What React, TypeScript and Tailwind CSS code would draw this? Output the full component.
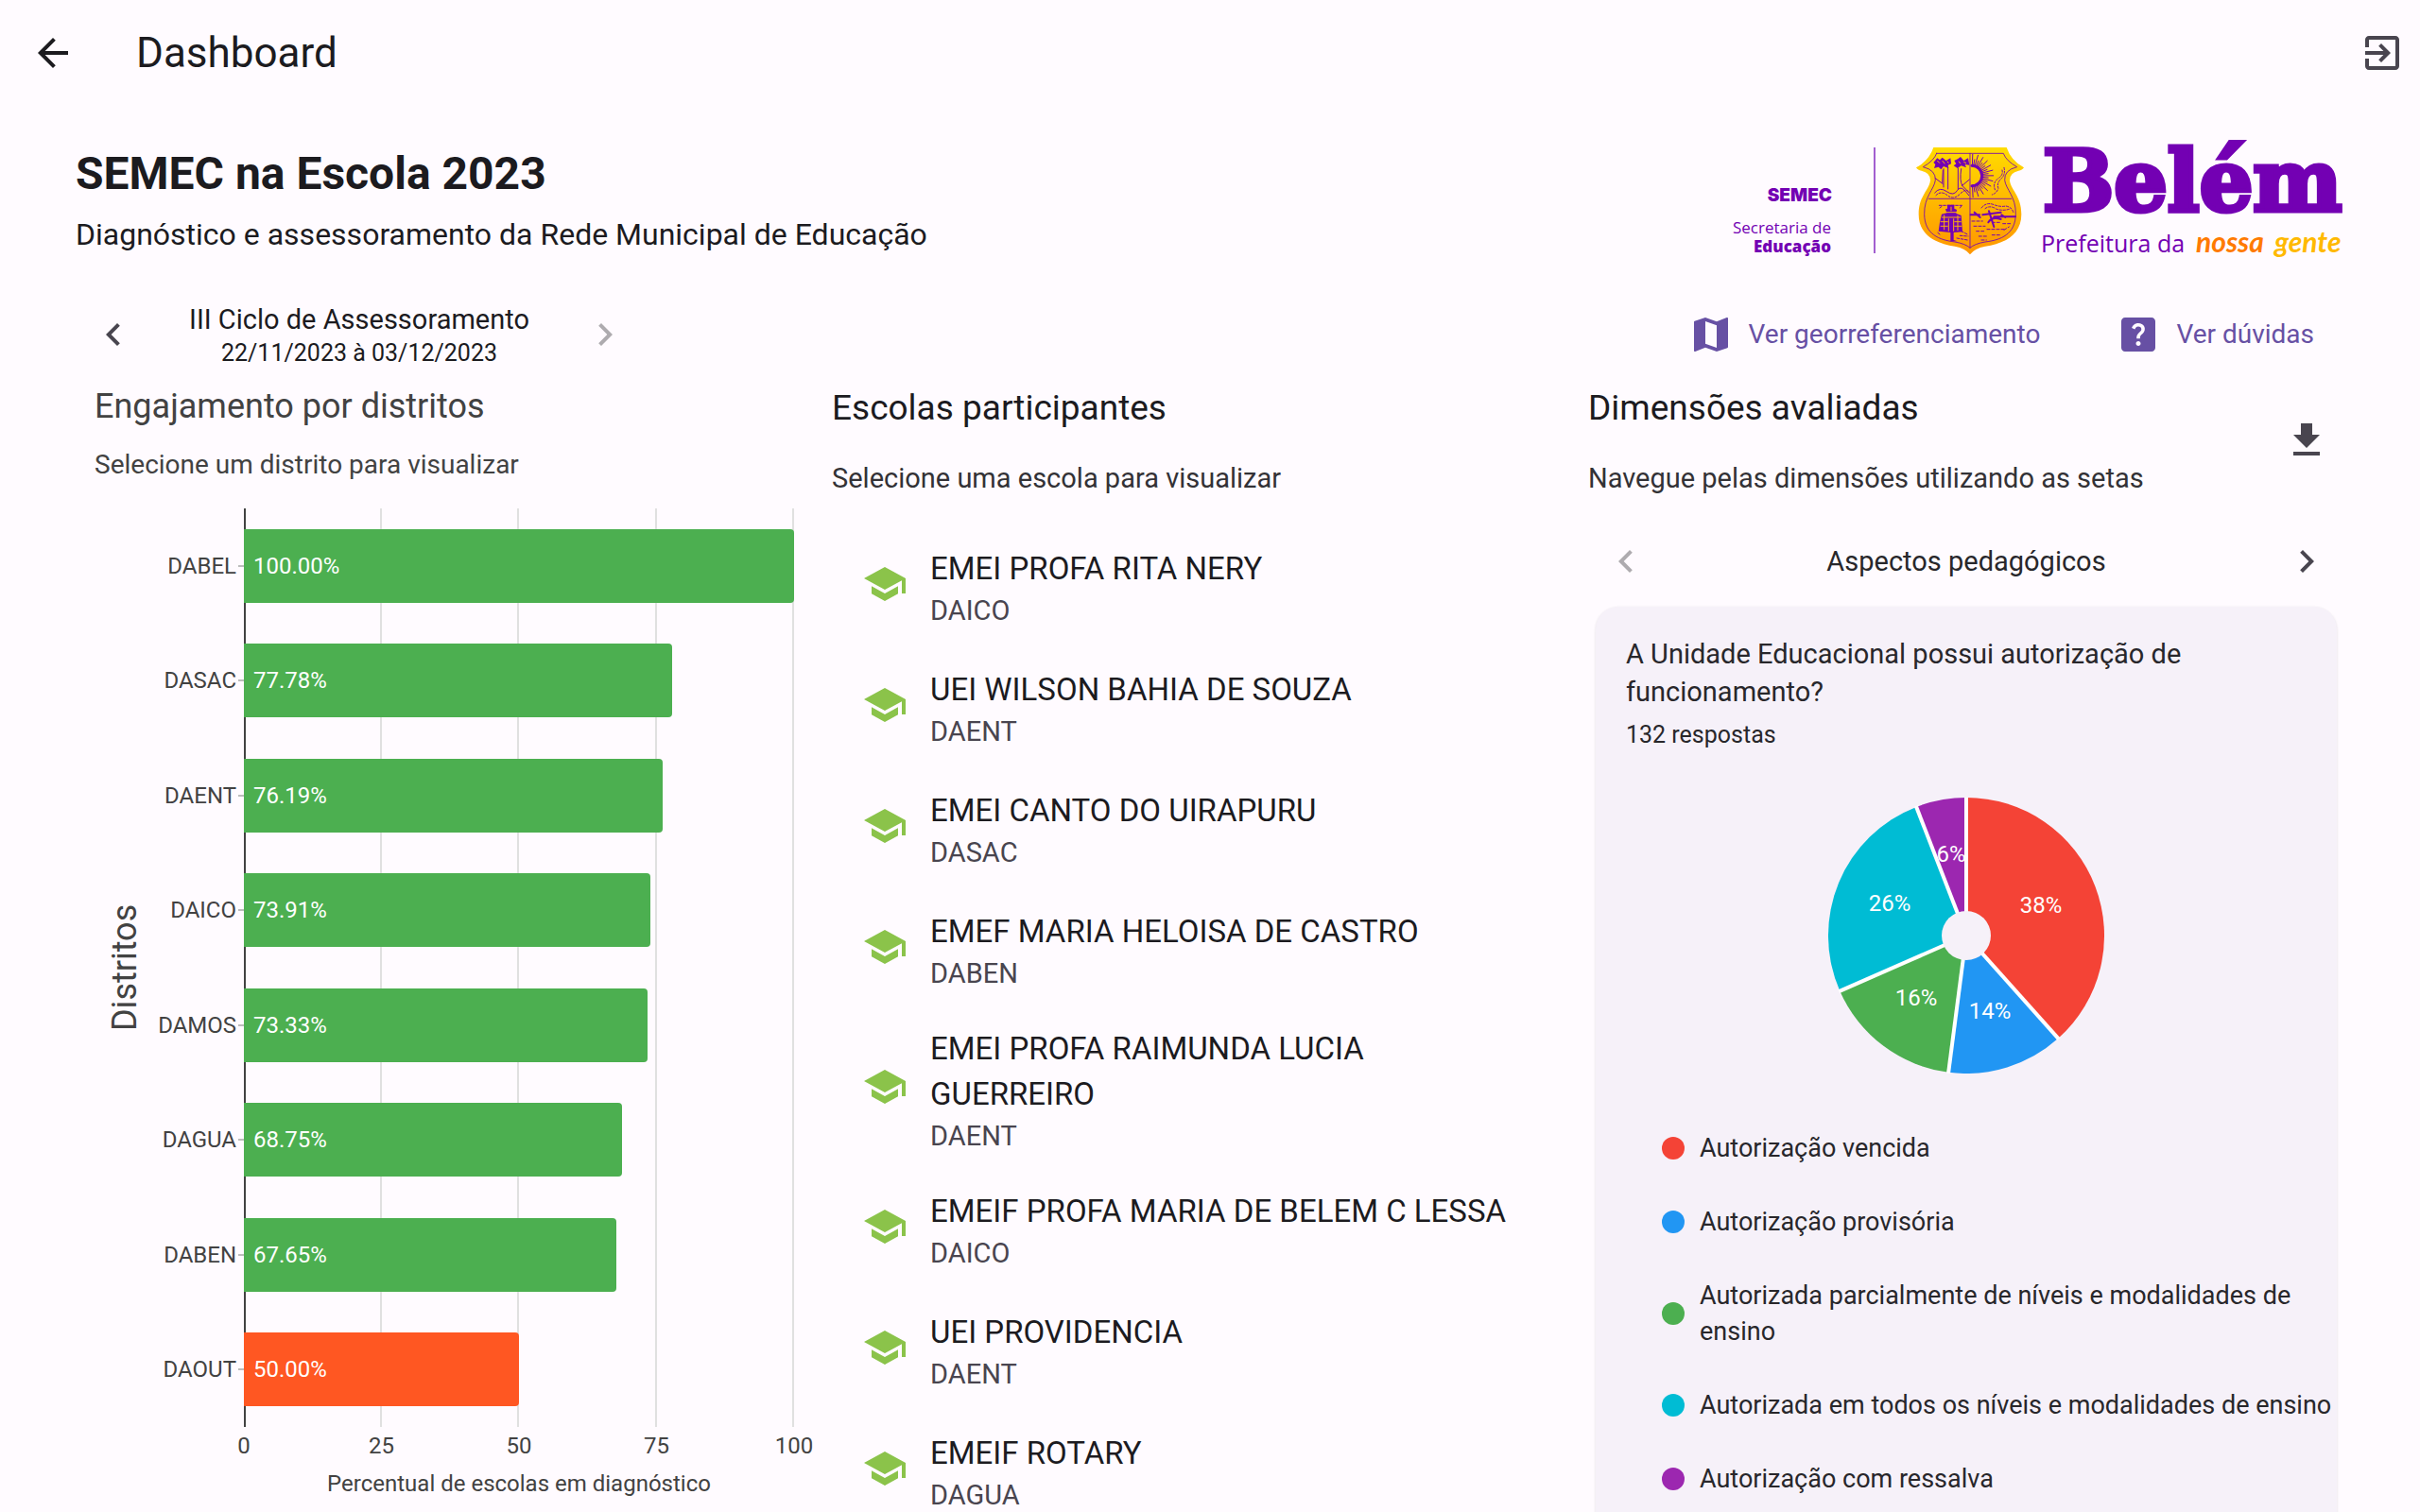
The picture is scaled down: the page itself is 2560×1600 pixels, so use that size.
import type { ReactNode } from "react";
import { MdHelpCenter, MdMap } from "react-icons/md";

const ICONS = {
  back: "M20 11H7.83l5.59-5.59L12 4l-8 8 8 8 1.41-1.41L7.83 13H20v-2z",
  exit: "M10.09 15.59L11.5 17l5-5-5-5-1.41 1.41L12.67 11H3v2h9.67l-2.58 2.59zM19 3H5c-1.11 0-2 .9-2 2v4h2V5h14v14H5v-4H3v4c0 1.1.89 2 2 2h14c1.1 0 2-.9 2-2V5c0-1.1-.9-2-2-2z",
  left: "M15.41 7.41L14 6l-6 6 6 6 1.41-1.41L10.83 12z",
  right: "M10 6L8.59 7.41 13.17 12l-4.58 4.59L10 18l6-6z",
  download: "M19 9h-4V3H9v6H5l7 7 7-7zM5 18v2h14v-2H5z",
  school: "M5 13.18v4L12 21l7-3.82v-4L12 17l-7-3.82zM12 3L1 9l11 6 9-4.91V17h2V9L12 3z",
};

function Icon({ name }: { name: keyof typeof ICONS }) {
  return (
    <svg viewBox="0 0 24 24" className="size-12 shrink-0 fill-current" aria-hidden="true">
      <path d={ICONS[name]} />
    </svg>
  );
}

function IconButton({ name, label, disabled = false }: { name: keyof typeof ICONS; label: string; disabled?: boolean }) {
  return (
    <button
      type="button"
      aria-label={label}
      disabled={disabled}
      className="flex size-20 shrink-0 items-center justify-center text-[#49454f] disabled:text-[#aeabaf]"
    >
      <Icon name={name} />
    </button>
  );
}

const districts = [
  { name: "DABEL", value: 100 },
  { name: "DASAC", value: 77.78 },
  { name: "DAENT", value: 76.19 },
  { name: "DAICO", value: 73.91 },
  { name: "DAMOS", value: 73.33 },
  { name: "DAGUA", value: 68.75 },
  { name: "DABEN", value: 67.65 },
  { name: "DAOUT", value: 50 },
];

const ticks = [0, 25, 50, 75, 100];

const schools = [
  { name: "EMEI PROFA RITA NERY", district: "DAICO" },
  { name: "UEI WILSON BAHIA DE SOUZA", district: "DAENT" },
  { name: "EMEI CANTO DO UIRAPURU", district: "DASAC" },
  { name: "EMEF MARIA HELOISA DE CASTRO", district: "DABEN" },
  { name: "EMEI PROFA RAIMUNDA LUCIA GUERREIRO", district: "DAENT" },
  { name: "EMEIF PROFA MARIA DE BELEM C LESSA", district: "DAICO" },
  { name: "UEI PROVIDENCIA", district: "DAENT" },
  { name: "EMEIF ROTARY", district: "DAGUA" },
];

const answers = [
  { label: "Autorização vencida", dot: "bg-[#f44336]", fill: "#f44336", from: 0, to: 138.2, text: "38%", x: 225, y: 114 },
  { label: "Autorização provisória", dot: "bg-[#2196f3]", fill: "#2196f3", from: 138.2, to: 187.4, text: "14%", x: 171, y: 226 },
  { label: "Autorizada parcialmente de níveis e modalidades de ensino", dot: "bg-[#4caf50]", fill: "#4caf50", from: 187.4, to: 246.3, text: "16%", x: 93, y: 212 },
  { label: "Autorizada em todos os níveis e modalidades de ensino", dot: "bg-[#00bcd4]", fill: "#00bcd4", from: 246.3, to: 338.8, text: "26%", x: 65, y: 112 },
  { label: "Autorização com ressalva", dot: "bg-[#9c27b0]", fill: "#9c27b0", from: 338.8, to: 360, text: "6%", x: 130, y: 60 },
];

const polar = (deg: number, r: number) => {
  const a = ((deg - 90) * Math.PI) / 180;
  return [146 + r * Math.cos(a), 146 + r * Math.sin(a)];
};

function slice(from: number, to: number) {
  const [x1, y1] = polar(from, 146);
  const [x2, y2] = polar(to, 146);
  return `M146 146L${x1} ${y1}A146 146 0 ${to - from > 180 ? 1 : 0} 1 ${x2} ${y2}Z`;
}

function PieChart() {
  return (
    <svg viewBox="0 0 292 292" className="size-[292px]" role="img" aria-label="Distribuição das respostas">
      {answers.map((a) => (
        <path key={a.label} d={slice(a.from, a.to)} fill={a.fill} />
      ))}
      {answers.map((a) => {
        const [x, y] = polar(a.from, 147);
        return <line key={a.label} x1="146" y1="146" x2={x} y2={y} stroke="#fff" strokeWidth="4" />;
      })}
      <circle cx="146" cy="146" r="26" fill="#f6f1f9" />
      {answers.map((a) => (
        <text key={a.label} x={a.x} y={a.y + 8} textAnchor="middle" fontSize="24" fill="#fff">
          {a.text}
        </text>
      ))}
    </svg>
  );
}

const rays = Array.from({ length: 25 }, (_, i) => -88 + i * 7.3);

function Crest() {
  return (
    <g transform="translate(190 -4) scale(0.3333)">
      <path
        d="M76 24H308Q322 66 363 88Q358 97 346 98Q318 104 318 128C320 158 355 176 355 236C355 302 300 330 240 338Q206 344 192 364Q178 344 144 338C84 330 29 302 29 236C29 176 64 158 66 128Q66 104 38 98Q26 97 21 88Q62 66 76 24Z"
        fill="url(#gold)"
      />
      <g fill="none" stroke="#7300b3" strokeWidth="3" strokeLinecap="round">
        <path
          d="M86 43H298Q306 66 341 86Q300 96 302 128C306 158 338 180 337 236C336 300 290 318 240 324Q206 330 192 343Q178 330 144 324C94 318 48 300 47 236C46 180 78 158 82 128Q84 96 43 86Q78 66 86 43Z"
          opacity="0.85"
        />
        <path d="M192 43V343M61 187H323" opacity="0.85" />
        <path d="M108 92V150M122 88V156M154 90V158M164 92Q158 130 168 146L190 168M82 122L106 140M104 136L106 96M166 146L190 126M80 168Q96 148 118 164T152 160T188 176" />
        <path d="M84 176Q100 160 120 176T160 172T188 166" strokeDasharray="6 5" />
        <path d="M300 88Q306 112 288 126Q276 140 282 154Q276 170 262 174M294 96Q298 112 282 122Q262 136 272 160" strokeDasharray="6 5" />
        {rays.map((d, i) => {
          const a = (d * Math.PI) / 180;
          const r = i % 2 ? 52 : 68;
          return (
            <line
              key={d}
              x1={198 + 30 * Math.cos(a)}
              y1={114 + 30 * Math.sin(a)}
              x2={198 + r * Math.cos(a)}
              y2={114 + r * Math.sin(a)}
            />
          );
        })}
        <path d="M198 82A32 32 0 0 1 198 146" strokeWidth="9" />
        <path d="M228 216Q244 196 268 206Q290 214 306 210Q326 214 330 232M240 218Q256 206 276 220Q298 226 316 220" strokeDasharray="7 5" />
        <path d="M194 238H222M206 230L224 246M232 238L290 230M252 226L268 276M268 244H336M292 238L304 246M250 262Q262 242 290 252" strokeWidth="6" />
        <path d="M198 258H232M204 274H240M246 284H300M212 290H236M262 262H286M296 266H326M220 306H250M262 302H288M228 318H244M300 286L316 276" strokeDasharray="9 6" />
        <path d="M94 208H166M96 216L106 208M160 216L166 208M96 300L86 292M164 290L184 300M160 304L186 306M150 312L184 318" strokeDasharray="8 5" />
      </g>
      <g fill="#7300b3">
        <path d="M76 72L88 58 96 64 104 56 116 66 130 58 132 76 122 80 124 90 108 84 100 94 92 86 78 90 82 78Z" />
        <path d="M142 66L154 60 162 54 172 66 186 58 190 80 176 78 180 88 164 82 152 90 140 82 148 76Z" />
        <path d="M120 206H142V218L150 222 148 234 164 240 168 292 140 294V318L152 322H130V294L92 290 96 262 102 236 118 232 114 220 120 218Z" />
      </g>
      <g stroke="#fdb20a" strokeWidth="3" fill="none">
        <path d="M112 230H152M102 246H162M98 260H122M142 260H164M98 274H122M142 274H166M124 250V290M140 250V290M110 238V286M153 240V288M132 212V226" />
        <path d="M88 66L96 74M104 66L112 76M120 68L124 74M156 68L162 76M172 70L180 74" />
      </g>
    </g>
  );
}

function Logo() {
  return (
    <svg viewBox="0 0 650 120" className="h-[120px] w-[650px] shrink-0 overflow-visible" role="img" aria-label="SEMEC, Prefeitura de Belém">
      <defs>
        <linearGradient id="gold" x1="0" y1="0" x2="0" y2="1">
          <stop offset="0" stopColor="#ffdc00" />
          <stop offset="1" stopColor="#ff9500" />
        </linearGradient>
      </defs>
      <g fill="#7300b3" textAnchor="end">
        <text x="108" y="61" fontFamily="Inter" fontSize="19" fontWeight="900">SEMEC</text>
        <text x="107" y="95" fontFamily="'Open Sans'" fontSize="17">Secretaria de</text>
        <text x="107" y="115" fontFamily="'Open Sans'" fontSize="17" fontWeight="800">Educação</text>
      </g>
      <rect x="152" y="4" width="2" height="112" fill="#a35fd0" />
      <Crest />
      <text x="331" y="71" fontFamily="'DejaVu Serif'" fontSize="89" fontWeight="700" fill="#7300b3" stroke="#7300b3" strokeWidth="5">
        Belém
      </text>
      <text x="329" y="115" fontFamily="'Open Sans'" fontSize="25" fill="#7300b3">Prefeitura da</text>
      <text x="493" y="115" fontFamily="Lato" fontSize="30" fontWeight="700" fontStyle="italic" fill="#ff7a00">nossa</text>
      <text x="576" y="115" fontFamily="Lato" fontSize="30" fontWeight="700" fontStyle="italic" fill="#ffb900">gente</text>
    </svg>
  );
}

function TextLink({ icon, children }: { icon: ReactNode; children: ReactNode }) {
  return (
    <a href="#" className="flex items-center gap-4 text-[28px] leading-10 text-[#6750a4]">
      {icon}
      {children}
    </a>
  );
}

function DistrictChart() {
  return (
    <section className="flex flex-col pt-3.5 text-[#424242]">
      <div className="px-5">
        <h2 className="text-4xl leading-[52px]">Engajamento por distritos</h2>
        <p className="mt-4 text-[28px] leading-10">Selecione um distrito para visualizar</p>
      </div>
      <div className="mt-[26px] flex h-[972px] pr-10 pl-[30px]">
        <div className="flex w-11 rotate-180 items-center justify-center text-4xl leading-[44px] [writing-mode:vertical-rl]">
          Distritos
        </div>
        <ul className="flex w-[104px] shrink-0 flex-col text-2xl">
          {districts.map((d) => (
            <li key={d.name} className="flex flex-1 items-center justify-end gap-0.5">
              {d.name}
              <span className="h-0.5 w-1.5 bg-[#bdbdbd]" />
            </li>
          ))}
        </ul>
        <div className="relative flex-1">
          <div className="absolute inset-0 flex justify-between">
            {ticks.map((t) => (
              <span key={t} className={t === 0 ? "-mr-0.5 w-0.5 bg-[#424242]" : "-ml-0.5 w-0.5 bg-[#e0e0e0]"} />
            ))}
          </div>
          <ul className="relative flex h-full flex-col">
            {districts.map((d) => (
              <li key={d.name} className="flex flex-1 items-center">
                <button
                  type="button"
                  aria-label={`${d.name} ${d.value.toFixed(2)}%`}
                  className={
                    d.value > 50
                      ? "h-[78px] rounded-r bg-[#4caf50] pl-2.5 text-left text-2xl text-white"
                      : "h-[78px] rounded-r bg-[#ff5722] pl-2.5 text-left text-2xl text-white"
                  }
                  style={{ width: `${d.value}%` }}
                >
                  {d.value.toFixed(2)}%
                </button>
              </li>
            ))}
          </ul>
        </div>
      </div>
      <div className="mt-0.5 mr-10 ml-[178px] flex flex-col gap-1 text-2xl">
        <div className="flex justify-between leading-9">
          {ticks.map((t) => (
            <span key={t} className="flex w-0 justify-center">{t}</span>
          ))}
        </div>
        <p className="text-center leading-9">Percentual de escolas em diagnóstico</p>
      </div>
    </section>
  );
}

function SchoolList() {
  return (
    <section className="flex flex-col pt-4">
      <h2 className="text-[37px] leading-[52px]">Escolas participantes</h2>
      <p className="mt-7 text-[29px] leading-10 text-[#333236]">Selecione uma escola para visualizar</p>
      <ul className="mt-7">
        {schools.map((s) => (
          <li key={s.name}>
            <button type="button" className="flex min-h-32 w-full items-center gap-6 py-3 pr-[72px] pl-8 text-left">
              <span className="text-[#8bc34a]">
                <Icon name="school" />
              </span>
              <span className="flex flex-col pt-2">
                <span className="text-[33px] leading-[48px]">{s.name}</span>
                <span className="text-[29px] leading-10 text-[#49454f]">{s.district}</span>
              </span>
            </button>
          </li>
        ))}
      </ul>
    </section>
  );
}

function Dimensions() {
  return (
    <section className="flex flex-col pt-4">
      <div className="flex items-center justify-between">
        <div>
          <h2 className="text-[37px] leading-[52px]">Dimensões avaliadas</h2>
          <p className="mt-7 text-[29px] leading-10 text-[#333236]">Navegue pelas dimensões utilizando as setas</p>
        </div>
        <IconButton name="download" label="Baixar" />
      </div>
      <div className="mt-7 flex items-center justify-between">
        <IconButton name="left" label="Dimensão anterior" disabled />
        <h3 className="text-[29px] leading-10 text-[#28272b]">Aspectos pedagógicos</h3>
        <IconButton name="right" label="Próxima dimensão" />
      </div>
      <article className="mx-2 mt-2 flex flex-col rounded-[24px] bg-[#f6f1f9] pt-[30px] pb-12 text-[#28272b] shadow-[0_1px_3px_rgba(0,0,0,0.12)]">
        <div className="px-8">
          <h4 className="text-[29px] leading-10">A Unidade Educacional possui autorização de funcionamento?</h4>
          <p className="mt-2.5 text-[25px] leading-8">132 respostas</p>
        </div>
        <div className="mt-[50px] flex justify-center">
          <PieChart />
        </div>
        <ul className="mt-[60px] flex flex-col gap-10 pl-[70px] text-[27px] leading-[38px]">
          {answers.map((a) => (
            <li key={a.label} className="flex items-center gap-4">
              <span className={`size-6 shrink-0 rounded-full ${a.dot}`} />
              {a.label}
            </li>
          ))}
        </ul>
      </article>
    </section>
  );
}

export default function App() {
  return (
    <div className="flex h-screen flex-col overflow-hidden bg-[#fffbff] font-[Roboto,sans-serif] text-[#1c1b1f]">
      <header className="flex h-28 shrink-0 items-center justify-between pr-4 pl-8">
        <div className="flex items-center gap-16">
          <button type="button" aria-label="Voltar">
            <Icon name="back" />
          </button>
          <h1 className="text-[44px] leading-[56px]">Dashboard</h1>
        </div>
        <button type="button" aria-label="Sair" className="text-[#49454f]">
          <Icon name="exit" />
        </button>
      </header>
      <main className="flex flex-col px-20 pt-10">
        <div className="flex items-start justify-between">
          <div>
            <h2 className="text-5xl leading-[64px] font-bold">SEMEC na Escola 2023</h2>
            <p className="mt-2 text-[32px] leading-[48px]">Diagnóstico e assessoramento da Rede Municipal de Educação</p>
          </div>
          <Logo />
        </div>
        <div className="mt-[42px] flex items-center justify-between">
          <div className="flex w-1/4 items-center justify-between">
            <IconButton name="left" label="Ciclo anterior" />
            <div className="text-center">
              <p className="text-[29px] leading-10">III Ciclo de Assessoramento</p>
              <p className="text-[25px] leading-8">22/11/2023 à 03/12/2023</p>
            </div>
            <IconButton name="right" label="Próximo ciclo" disabled />
          </div>
          <nav className="flex items-center gap-20 pr-8">
            <TextLink icon={<MdMap className="size-12" />}>Ver georreferenciamento</TextLink>
            <TextLink icon={<MdHelpCenter className="size-12" />}>Ver dúvidas</TextLink>
          </nav>
        </div>
        <div className="-mt-1 grid grid-cols-3">
          <DistrictChart />
          <SchoolList />
          <Dimensions />
        </div>
      </main>
    </div>
  );
}
